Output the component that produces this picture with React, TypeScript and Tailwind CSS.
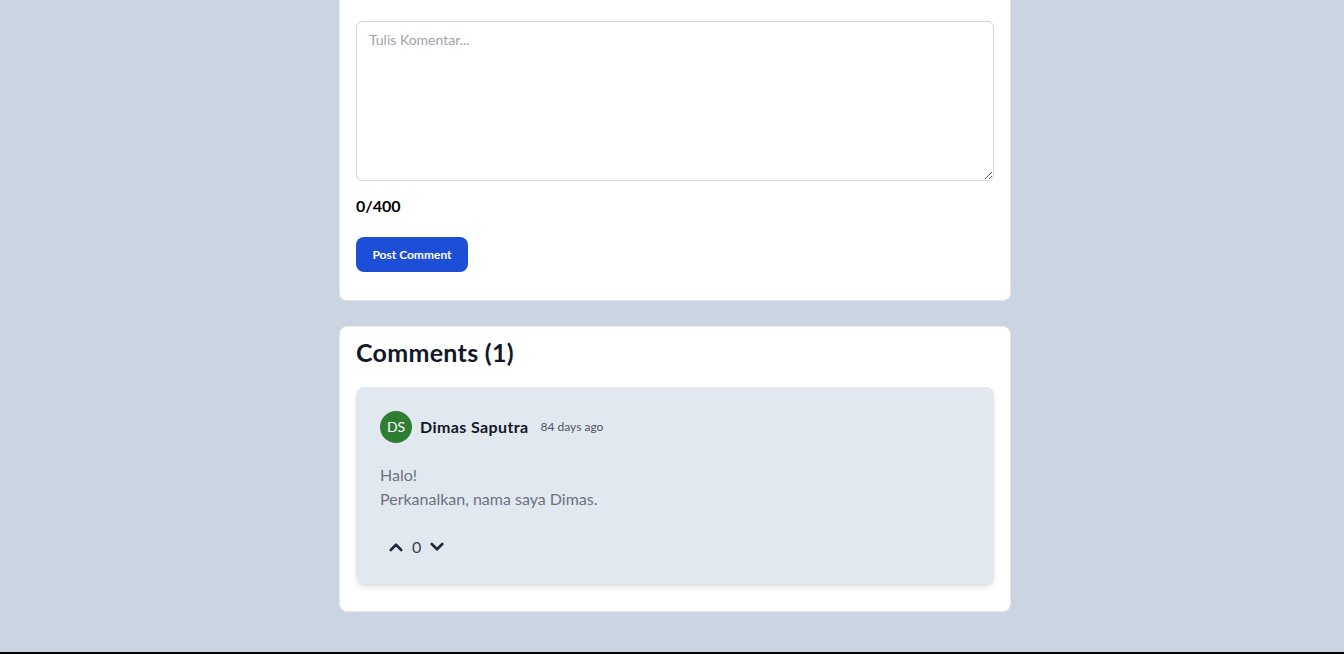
import React from "react";

function ChevronUp() {
  return (
    <svg width="18" height="18" viewBox="0 0 24 24" fill="none" stroke="#1f2937" strokeWidth="3.5" strokeLinecap="round" strokeLinejoin="round">
      <path d="M5 16l7-7 7 7" />
    </svg>
  );
}
function ChevronDown() {
  return (
    <svg width="18" height="18" viewBox="0 0 24 24" fill="none" stroke="#1f2937" strokeWidth="3.5" strokeLinecap="round" strokeLinejoin="round">
      <path d="M5 8l7 7 7-7" />
    </svg>
  );
}

export default function App() {
  return (
    <div className="min-h-[654px] bg-[#cbd5e1] flex flex-col items-center pl-[6px] border-b-2 border-black" style={{ fontFamily: 'Lato, "Noto Sans", sans-serif' }}>
      <div className="w-[672px] flex flex-col gap-[25px] h-[652px]">
        <div className="bg-white border border-t-0 border-[#e5e7eb] rounded-b-lg px-4 pt-[21px] pb-[28px]">
          <textarea
            placeholder="Tulis Komentar..."
            className="block w-full h-[160px] border border-[#d1d5db] rounded-md px-3 py-2 text-sm text-gray-900 placeholder:text-[#9ca3af] outline-none"
            style={{ fontFamily: 'Lato, sans-serif' }}
          />
          <div className="mt-[13px] text-base font-bold text-black leading-6">0/400</div>
          <button className="mt-[19px] h-[35px] w-[112px] bg-[#1d4ed8] text-white text-xs font-bold rounded-lg">
            Post Comment
          </button>
        </div>
        <div className="bg-white border border-[#e5e7eb] rounded-lg px-4 pt-[9px] pb-[27px]">
          <h2 className="text-[25px] tracking-[0.3px] font-bold text-[#111827] leading-8">Comments (1)</h2>
          <div className="mt-[19px] bg-[#e2e8f0] rounded-lg shadow-md px-6 pt-6 pb-[25px]">
            <div className="flex items-center">
              <div className="w-8 h-8 rounded-full bg-[#2e7d32] text-white text-sm flex items-center justify-center">DS</div>
              <span className="ml-2 font-bold text-base tracking-[0.4px] text-[#111827]">Dimas Saputra</span>
              <span className="ml-3 text-xs text-[#4b5563]">84 days ago</span>
            </div>
            <div className="mt-5 text-base leading-6 text-[#6b7280]">
              <p>Halo!</p>
              <p>Perkanalkan, nama saya Dimas.</p>
            </div>
            <div className="mt-6 flex items-center gap-[7px] pl-[7px]">
              <ChevronUp />
              <span className="text-base text-[#374151] leading-6">0</span>
              <ChevronDown />
            </div>
          </div>
        </div>
      </div>
    </div>
  );
}
